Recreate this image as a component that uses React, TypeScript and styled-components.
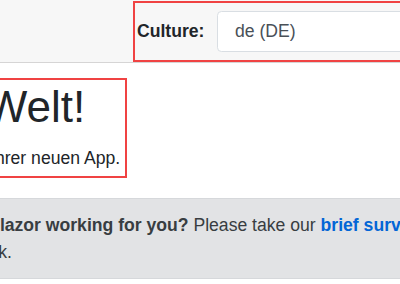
import React from "react";
import styled, { createGlobalStyle, css } from "styled-components";

const GlobalStyle = createGlobalStyle`
  html, body {
    margin: 0;
    padding: 0;
    background: #fff;
  }
  body {
    width: 400px;
    height: 284px;
    overflow: hidden;
    font-family: "Liberation Sans", Arial, Helvetica, sans-serif;
    font-size: 17.6px;
    line-height: 1.5;
    color: #212529;
  }
`;

// red marker box drawn round the parts under inspection
const highlighted = css`
  border: 2px solid #f04343;
  box-sizing: border-box;
`;

const TopRow = styled.header`
  display: flex;
  align-items: flex-start;
  height: 63px;
  padding: 1px 0 0 133px;
  box-sizing: border-box;
  background: #f7f7f7;
  border-bottom: 1px solid #d6d5d5;
`;

const CultureForm = styled.form`
  ${highlighted};
  display: flex;
  align-items: center;
  gap: 12.5px;
  height: 61px;
  padding-left: 2px;
  margin: 0;
  flex-shrink: 0;
`;

const Label = styled.label`
  font-weight: 700;
  color: #212529;
`;

const Select = styled.div`
  display: flex;
  align-items: center;
  width: 260px;
  height: 41.6px;
  box-sizing: border-box;
  padding-left: 17px;
  background: #fff;
  border: 1px solid #d9dee3;
  border-radius: 4.4px;
  font-size: 17.6px;
  color: #495057;
`;

const Main = styled.main`
  display: flex;
  flex-direction: column;
  align-items: flex-start;
  width: 669px;
  margin-left: -152px;
  padding-top: 15px;
`;

const Intro = styled.section`
  ${highlighted};
  padding: 1px 5px 4px 11px;
`;

const Title = styled.h1`
  margin: 0 0 11.6px;
  font-size: 44px;
  font-weight: 500;
  line-height: 1.2;
  color: #212529;
`;

const Lead = styled.p`
  margin: 0;
  white-space: nowrap;
`;

const SurveyAlert = styled.div`
  width: 669px;
  box-sizing: border-box;
  margin-top: 20.5px;
  padding: 13.2px 22px;
  background: #e2e3e5;
  border: 1px solid #d6d8db;
  border-radius: 4.4px;
  color: #383d41;
`;

const PencilIcon = styled.svg`
  display: inline-block;
  width: 17.6px;
  height: 17.6px;
  margin-right: 37px;
  fill: currentColor;
  vertical-align: -2px;
`;

const SurveyLink = styled.a`
  font-weight: 700;
  color: #0366d6;
  text-decoration: none;
`;

export default function App() {
  return (
    <>
      <GlobalStyle />
      <TopRow>
        <CultureForm>
          <Label>Culture:</Label>
          <Select>de (DE)</Select>
        </CultureForm>
      </TopRow>
      <Main>
        <Intro>
          <Title>Hallo, Welt!</Title>
          <Lead>Willkommen bei Ihrer neuen App.</Lead>
        </Intro>
        <SurveyAlert role="alert">
          <PencilIcon viewBox="0 0 8 8" aria-hidden="true">
            <path d="M6 0l-1 1 2 2 1-1-2-2zm-2 2l-4 4v2h2l4-4-2-2z" />
          </PencilIcon>
          <strong>How is Blazor working for you?</strong> Please take our{" "}
          <SurveyLink href="#">brief survey</SurveyLink> and tell us what you
          think.
        </SurveyAlert>
      </Main>
    </>
  );
}
